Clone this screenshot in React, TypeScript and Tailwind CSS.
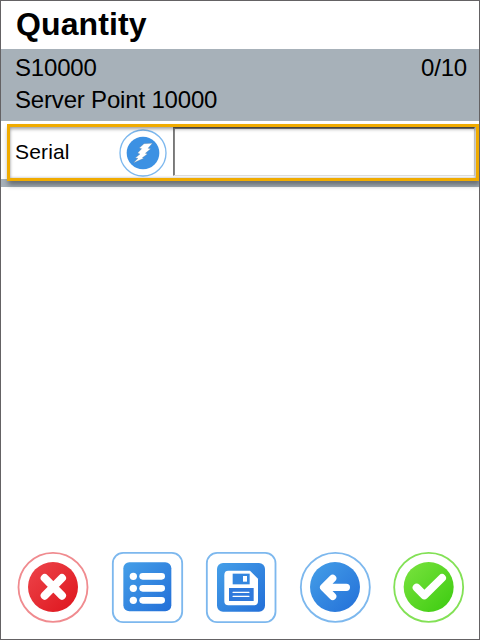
import React from "react";

const BLUE_RING = "#7db8ee";

function Gradients() {
  return (
    <svg className="absolute h-0 w-0" aria-hidden="true">
      <defs>
        <linearGradient id="blue" x1="0" y1="0" x2="1" y2="1">
          <stop offset="0" stopColor="#459fe8" />
          <stop offset="1" stopColor="#236fd8" />
        </linearGradient>
        <linearGradient id="red" x1="0" y1="0" x2="1" y2="1">
          <stop offset="0" stopColor="#ed454b" />
          <stop offset="1" stopColor="#de141c" />
        </linearGradient>
        <linearGradient id="green" x1="0" y1="0" x2="1" y2="1">
          <stop offset="0" stopColor="#7be33f" />
          <stop offset="1" stopColor="#3bcb0f" />
        </linearGradient>
      </defs>
    </svg>
  );
}

function ActionButton({ label, viewBox, children }: { label: string; viewBox: string; children: React.ReactNode }) {
  return (
    <button type="button" aria-label={label} className="size-[72px] shrink-0">
      <svg viewBox={viewBox} className="block size-[72px] overflow-visible" fill="none">
        {children}
      </svg>
    </button>
  );
}

export default function App() {
  return (
    <main className="relative flex h-[640px] w-[480px] flex-col overflow-hidden border border-[#646264] bg-white font-['Liberation_Sans',Arial,sans-serif] text-black">
      <Gradients />
      <header className="h-12 pl-[15px] pt-[5px]">
        <h1 className="text-[32px] font-bold leading-[36px] tracking-[0.1px]">Quantity</h1>
      </header>

      <section className="h-[72px] bg-[#a7b1b9] pl-[14px] pr-3 pt-[3px] text-[24px] leading-[32px] tracking-[-0.18px]">
        <div className="flex justify-between">
          <span>S10000</span>
          <span>0/10</span>
        </div>
        <div>Server Point 10000</div>
      </section>

      <section className="h-[66px] border-b-8 border-[#a7b1b9] pl-1.5 pt-[3px]">
        <div className="relative flex h-[57px] w-[472px] border-[3px] border-[#f0ab00] bg-white shadow-[1px_4px_5px_rgba(0,0,0,0.38)]">
          <label htmlFor="serial" className="w-[109px] pl-[5px] pt-[13px] text-[21px] leading-6 tracking-[0.15px]">
            Serial
          </label>
          <button type="button" aria-label="Generate serial" className="mt-[2px] size-[49px] shrink-0">
            <svg viewBox="42 43 147 147" className="block size-[49px] overflow-visible" fill="none">
              <circle cx="114" cy="115" r="69" stroke={BLUE_RING} strokeWidth="4" fill="white" />
              <circle cx="114" cy="115" r="49" fill="#3c91e3" />
              <path
                d="M117 87 L142 86 L129 101 L137 102 L121 116 L127 118 L112 129 L116 131 L86 144 L99 131 L91 130 L105 118 L98 115 L110 102 L103 100 Z"
                fill="white"
                stroke="#737d85"
                strokeWidth="0.8"
              />
            </svg>
          </button>
          <input
            id="serial"
            className="ml-[5px] mt-0 h-[49px] w-[302px] border border-b-[#dedede] border-l-[#777777] border-r-[#d4d4d4] border-t-[#626262] bg-white px-2 text-xl shadow-[inset_1px_1px_0_#858585] outline-none"
          />
          <div className="pointer-events-none absolute inset-0 shadow-[inset_0_3px_3px_rgba(0,0,0,0.22),inset_1px_0_3px_rgba(0,0,0,0.12),inset_-1px_0_3px_rgba(0,0,0,0.2)]" />
        </div>
      </section>

      <div className="flex-1" />

      <nav className="mb-4 flex h-[72px] gap-[22px] pl-4">
        <ActionButton label="Cancel" viewBox="21 18 216 216">
          <circle cx="129" cy="127" r="103.5" stroke="#f08b8f" strokeWidth="5.5" />
          <circle cx="129" cy="126" r="75" fill="url(#red)" />
          <path d="M104 99 L156 152 M156 99 L104 152" stroke="white" strokeWidth="24" strokeLinecap="round" />
        </ActionButton>
        <ActionButton label="List" viewBox="27 18 216 216">
          <rect x="32.5" y="23.5" width="208" height="208" rx="31" stroke={BLUE_RING} strokeWidth="5.5" />
          <rect x="64" y="52" width="144" height="147" rx="18" fill="url(#blue)" />
          <g fill="white">
            <circle cx="94" cy="94" r="11" />
            <circle cx="94" cy="130" r="11" />
            <circle cx="94" cy="166" r="11" />
            <rect x="112" y="84" width="77" height="20" rx="10" />
            <rect x="112" y="120" width="77" height="20" rx="10" />
            <rect x="112" y="156" width="77" height="20" rx="10" />
          </g>
        </ActionButton>
        <ActionButton label="Save" viewBox="27 18 216 216">
          <rect x="32.5" y="23.5" width="206" height="208" rx="31" stroke={BLUE_RING} strokeWidth="5.5" />
          <rect x="63" y="54" width="144" height="146" rx="18" fill="url(#blue)" />
          <path
            d="M97 77 H162 L186 101 V168 Q186 181 174 181 H97 Q85 181 85 168 V90 Q85 77 97 77 Z"
            fill="white"
          />
          <rect x="110" y="86" width="51" height="32" fill="#3486df" />
          <rect x="141" y="93" width="12" height="17" fill="white" />
          <rect x="99" y="129" width="74" height="39" fill="#3079dc" />
          <path d="M111 142 H159 M111 154 H159" stroke="white" strokeWidth="3.5" strokeLinecap="round" />
        </ActionButton>
        <ActionButton label="Back" viewBox="27 18 216 216">
          <circle cx="136" cy="127" r="103.5" stroke={BLUE_RING} strokeWidth="5.5" />
          <circle cx="135" cy="126" r="75" fill="url(#blue)" />
          <path
            d="M128 100 L101 127 L128 154 M103 127 H169"
            stroke="white"
            strokeWidth="22"
            strokeLinecap="round"
            strokeLinejoin="round"
          />
        </ActionButton>
        <ActionButton label="Confirm" viewBox="24 18 216 216">
          <circle cx="131" cy="127" r="103.5" stroke="#83e156" strokeWidth="5.5" />
          <circle cx="131" cy="126" r="75" fill="url(#green)" />
          <path
            d="M95 128 L118 151 L171 99"
            stroke="white"
            strokeWidth="24"
            strokeLinecap="round"
            strokeLinejoin="round"
          />
        </ActionButton>
      </nav>
    </main>
  );
}
